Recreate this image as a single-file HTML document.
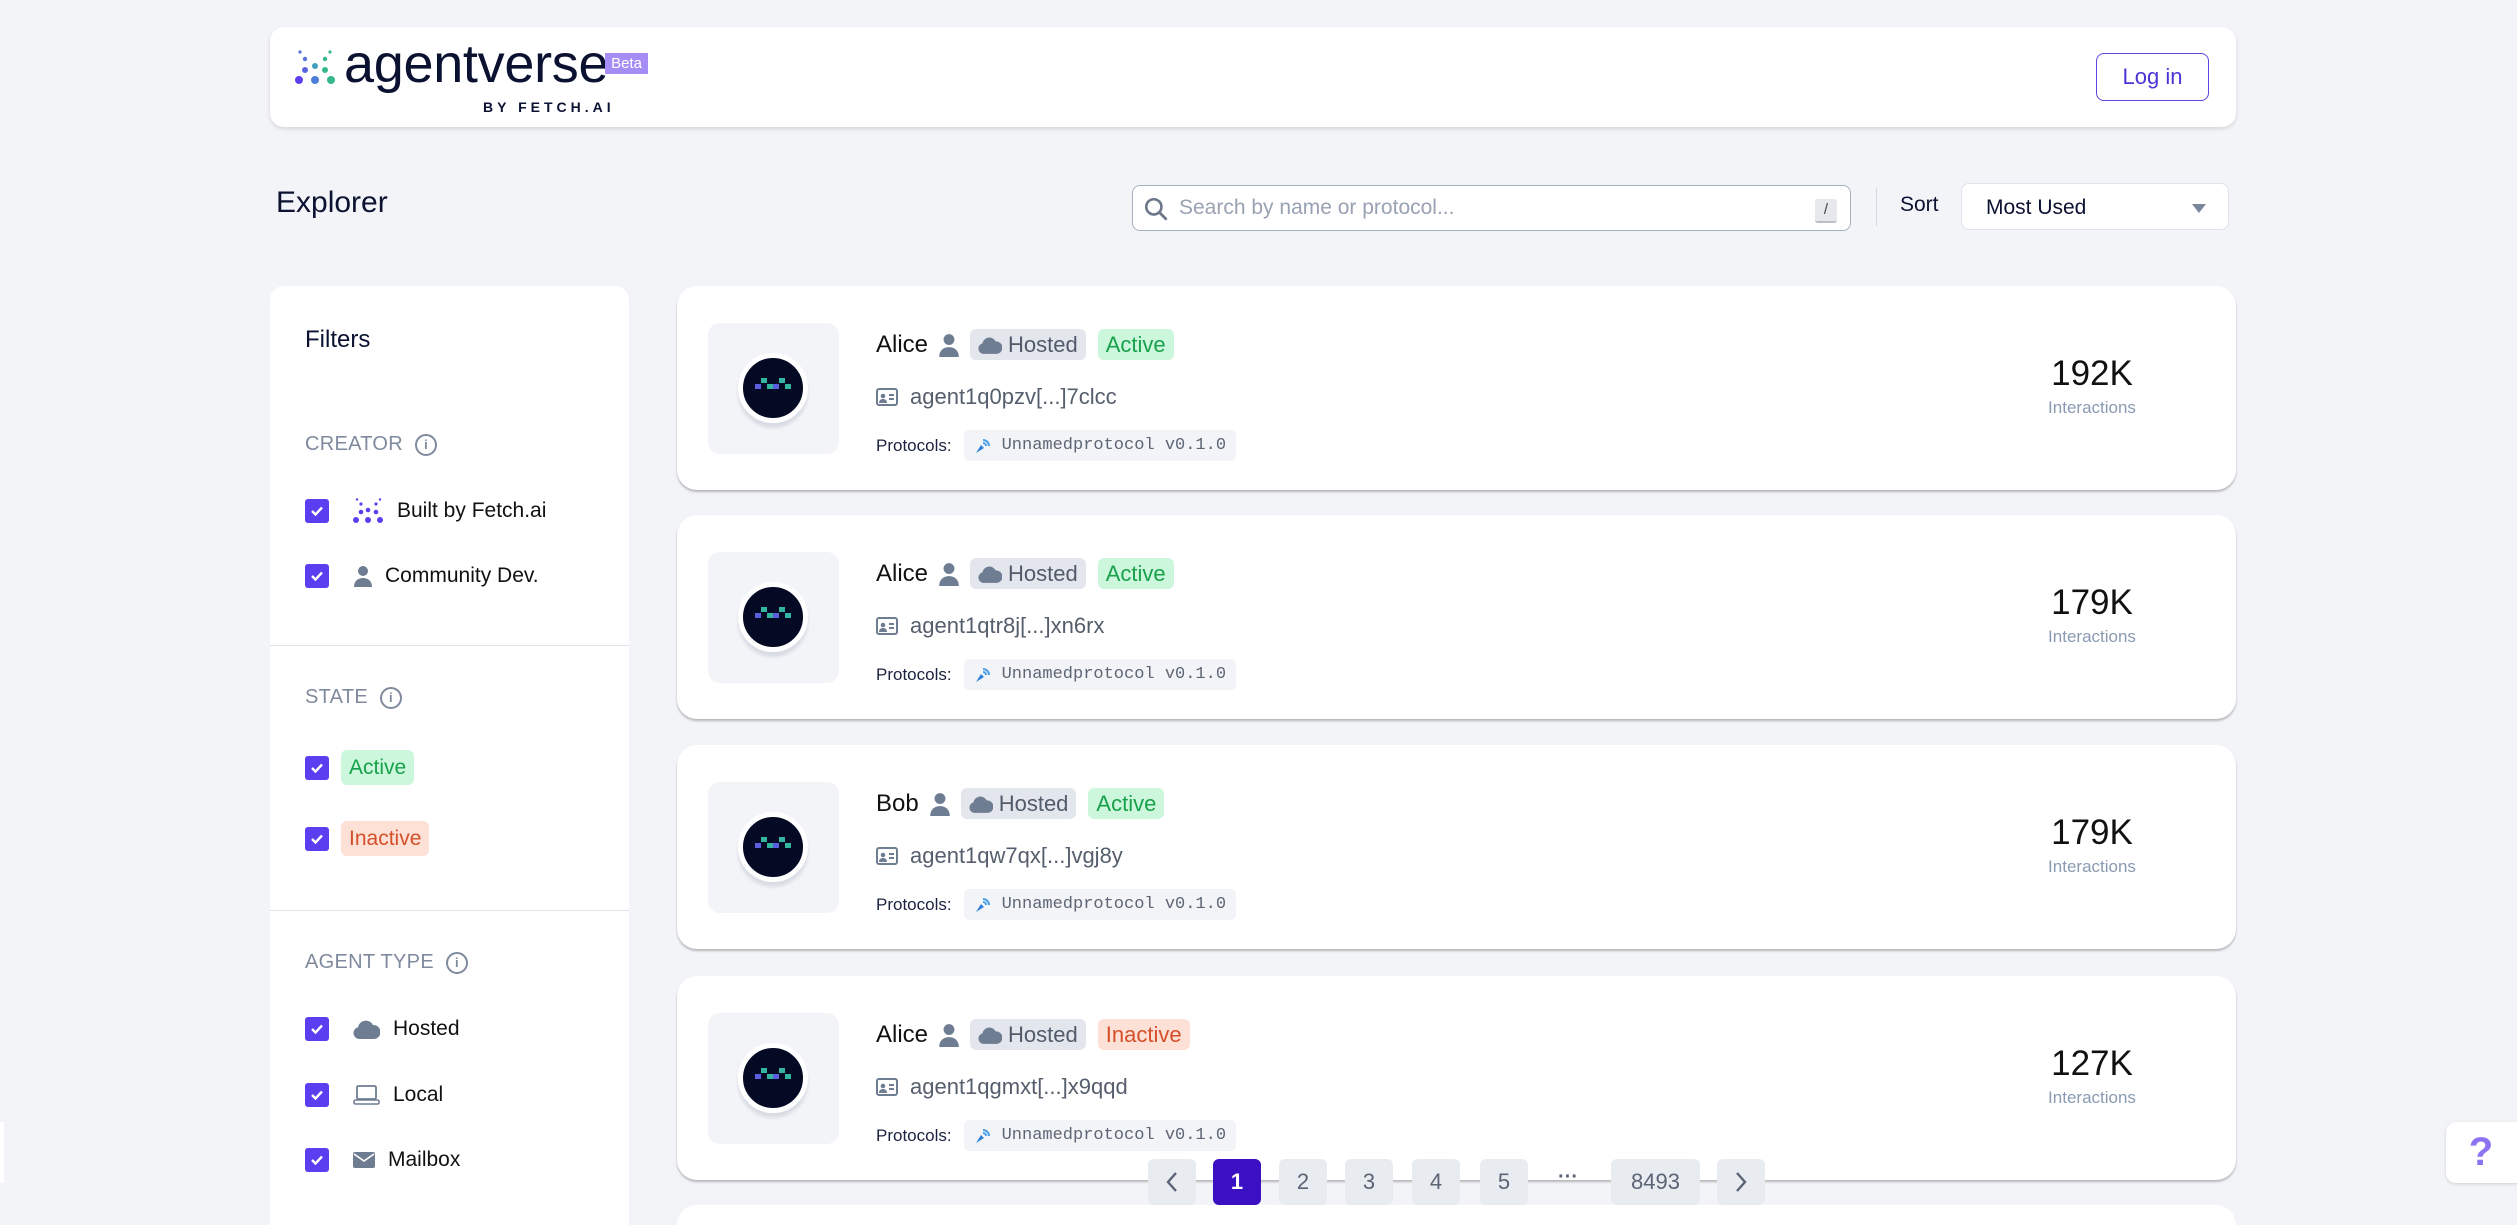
<!DOCTYPE html>
<html style="width:2517px;height:1225px;overflow:hidden"><head><meta charset="utf-8">
<style>
*{box-sizing:border-box;margin:0;padding:0}
body{width:2517px;height:1225px;overflow:hidden;background:#f3f4f8;font-family:"Liberation Sans",sans-serif;color:#0b1231;position:relative}
.abs{position:absolute}
.hdr{left:270px;top:27px;width:1966px;height:100px;background:#fff;border-radius:14px;box-shadow:0 2px 4px rgba(0,0,0,.12)}
.login{left:2096px;top:53px;width:113px;height:48px;border:1.5px solid #5b46e0;border-radius:8px;color:#4a35d6;font-size:22px;display:flex;align-items:center;justify-content:center}
.side{left:270px;top:286px;width:359px;height:939px;background:#fff;border-radius:14px 14px 0 0}
.sec{color:#7f8a9e;font-size:20px;letter-spacing:.3px;display:flex;align-items:center;gap:12px}
.info{width:22px;height:22px;border:2px solid #7f8a9e;border-radius:50%;font-size:13px;font-weight:bold;display:flex;align-items:center;justify-content:center}
.cb{width:24px;height:24px;background:#5b3ef0;border-radius:3px;display:flex;align-items:center;justify-content:center}
.row{display:flex;align-items:center;font-size:21px;color:#111}
.hr{height:1px;background:#dfe2e8;width:359px;left:270px}
.card{left:677px;width:1559px;height:204px;background:#fff;border-radius:20px;box-shadow:0 2px 2px rgba(0,0,0,.25)}
.av{left:31px;top:37px;width:131px;height:131px;background:#f3f4f8;border-radius:12px}
.circ{left:30px;top:30px;width:70px;height:70px;border-radius:50%;background:#050a24;border:5px solid #fff;box-shadow:0 5px 3px #d9dce4}
.name{left:199px;top:43px;display:flex;align-items:center;gap:10px;font-size:24px;color:#111}
.badge{height:31px;border-radius:6px;padding:0 8px;display:flex;align-items:center;gap:6px;font-size:22px}
.hosted{background:#e3e6ec;color:#515b6b}
.act{background:#cdf7dc;color:#18a14b}
.inact{background:#fde0d6;color:#d4502a}
.addr{left:199px;top:98px;display:flex;align-items:center;gap:12px;font-size:22px;color:#555e6c}
.proto{left:199px;top:144px;display:flex;align-items:center;gap:12px;font-size:17px;color:#1b2240}
.chip{background:#f3f4f8;border-radius:5px;height:31px;padding:0 10px;display:flex;align-items:center;gap:10px;font-family:"Liberation Mono",monospace;color:#5d6675;font-size:17px}
.num{left:1325px;width:180px;top:68px;text-align:center;font-size:35px;color:#111}
.int{left:1325px;width:180px;top:112px;text-align:center;font-size:17px;color:#8a9ab2}
.pg{top:1159px;width:48px;height:46px;background:#e8ebf0;border-radius:6px;display:flex;align-items:center;justify-content:center;font-size:22px;color:#5a6475}
</style></head><body>

<div class="abs hdr">
  <svg class="abs" style="left:25px;top:23px" width="42" height="36" viewBox="0 0 42 36">
    <circle cx="4" cy="30" r="4" fill="#5f3ef0"/><circle cx="20" cy="30" r="4" fill="#4c7dd9"/><circle cx="36" cy="30" r="4" fill="#35b88a"/>
    <circle cx="10" cy="20" r="3" fill="#5a63e0"/><circle cx="20" cy="16" r="3" fill="#3f9fc0"/><circle cx="30" cy="20" r="3" fill="#35b88a"/>
    <circle cx="10" cy="9" r="2.2" fill="#5a73d8"/><circle cx="30" cy="9" r="2.2" fill="#35b88a"/>
    <circle cx="5" cy="2" r="1.6" fill="#5a73d8"/><circle cx="35" cy="2" r="1.6" fill="#35b88a"/>
  </svg>
  <div class="abs" style="left:74px;top:6px;font-size:54px;color:#0b1231;letter-spacing:-.3px">agentverse</div>
  <div class="abs" style="left:335px;top:26px;width:43px;height:21px;background:#a58df5;color:#fff;font-size:15px;display:flex;align-items:center;justify-content:center">Beta</div>
  <div class="abs" style="left:213px;top:72px;font-size:14px;font-weight:bold;letter-spacing:4px;color:#0b1231">BY FETCH.AI</div>
</div>
<div class="abs login">Log in</div>

<div class="abs" style="left:276px;top:186px;font-size:30px;color:#0b1231">Explorer</div>

<div class="abs" style="left:1132px;top:185px;width:719px;height:46px;background:#fff;border:1.5px solid #a9b0bd;border-radius:8px">
  <svg class="abs" style="left:10px;top:10px" width="26" height="26" viewBox="0 0 24 24"><circle cx="10" cy="10" r="7" fill="none" stroke="#6c778a" stroke-width="2.4"/><path d="M15 15l6 6" stroke="#6c778a" stroke-width="2.6" stroke-linecap="round"/></svg>
  <div class="abs" style="left:46px;top:10px;font-size:21px;color:#98a2b3">Search by name or protocol...</div>
  <div class="abs" style="left:682px;top:13px;width:22px;height:24px;background:#e6e8ec;border-bottom:2px solid #b9bec8;border-radius:3px;font-size:15px;color:#444;text-align:center;line-height:22px">/</div>
</div>
<div class="abs" style="left:1876px;top:188px;width:1px;height:38px;background:#d3d7de"></div>
<div class="abs" style="left:1900px;top:193px;font-size:21px;color:#0b1231">Sort</div>
<div class="abs" style="left:1961px;top:183px;width:268px;height:47px;background:#fff;border:1px solid #dfe2e8;border-radius:8px">
  <div class="abs" style="left:24px;top:12px;font-size:21px;color:#0b1231">Most Used</div>
  <div class="abs" style="left:230px;top:20px;width:0;height:0;border-left:7px solid transparent;border-right:7px solid transparent;border-top:9px solid #7a869a"></div>
</div>

<div class="abs side"></div>
<div class="abs" style="left:305px;top:326px;font-size:24px;color:#0b1231">Filters</div>

<div class="abs sec" style="left:305px;top:433px">CREATOR <span class="info">i</span></div>
<div class="abs row" style="left:305px;top:498px"><div class="cb"><svg width="14" height="12" viewBox="0 0 14 12"><path d="M2 6l3.5 3.5L12 2.5" stroke="#fff" stroke-width="2.4" fill="none"/></svg></div>
  <svg style="margin-left:24px" width="30" height="26" viewBox="0 0 30 26"><g fill="#5f3ef0"><circle cx="3" cy="22" r="3"/><circle cx="15" cy="22" r="3"/><circle cx="27" cy="22" r="3"/><circle cx="8" cy="14" r="2.3"/><circle cx="15" cy="12" r="2.3"/><circle cx="23" cy="14" r="2.3"/><circle cx="8" cy="6" r="1.6"/><circle cx="23" cy="6" r="1.6"/><circle cx="4" cy="1.5" r="1.2"/><circle cx="27" cy="1.5" r="1.2"/></g></svg>
  <span style="margin-left:14px">Built by Fetch.ai</span></div>
<div class="abs row" style="left:305px;top:564px"><div class="cb"><svg width="14" height="12" viewBox="0 0 14 12"><path d="M2 6l3.5 3.5L12 2.5" stroke="#fff" stroke-width="2.4" fill="none"/></svg></div>
  <svg style="margin-left:24px" width="20" height="22" viewBox="0 0 20 22"><circle cx="10" cy="6" r="5" fill="#6f7d92"/><path d="M1 22c0-6 4-9 9-9s9 3 9 9z" fill="#6f7d92"/></svg>
  <span style="margin-left:12px">Community Dev.</span></div>
<div class="abs hr" style="top:645px"></div>

<div class="abs sec" style="left:305px;top:686px">STATE <span class="info">i</span></div>
<div class="abs row" style="left:305px;top:750px"><div class="cb"><svg width="14" height="12" viewBox="0 0 14 12"><path d="M2 6l3.5 3.5L12 2.5" stroke="#fff" stroke-width="2.4" fill="none"/></svg></div>
  <span class="badge act" style="margin-left:12px;height:35px;font-size:21px">Active</span></div>
<div class="abs row" style="left:305px;top:821px"><div class="cb"><svg width="14" height="12" viewBox="0 0 14 12"><path d="M2 6l3.5 3.5L12 2.5" stroke="#fff" stroke-width="2.4" fill="none"/></svg></div>
  <span class="badge inact" style="margin-left:12px;height:35px;font-size:21px">Inactive</span></div>
<div class="abs hr" style="top:910px"></div>

<div class="abs sec" style="left:305px;top:951px">AGENT TYPE <span class="info">i</span></div>
<div class="abs row" style="left:305px;top:1017px"><div class="cb"><svg width="14" height="12" viewBox="0 0 14 12"><path d="M2 6l3.5 3.5L12 2.5" stroke="#fff" stroke-width="2.4" fill="none"/></svg></div>
  <svg style="margin-left:24px" width="27" height="20" viewBox="0 0 27 20"><path d="M6 20a6 6 0 0 1-1-11.8A8 8 0 0 1 20 6a6 6 0 0 1 1 14z" fill="#6f7d92"/></svg>
  <span style="margin-left:13px">Hosted</span></div>
<div class="abs row" style="left:305px;top:1083px"><div class="cb"><svg width="14" height="12" viewBox="0 0 14 12"><path d="M2 6l3.5 3.5L12 2.5" stroke="#fff" stroke-width="2.4" fill="none"/></svg></div>
  <svg style="margin-left:24px" width="27" height="20" viewBox="0 0 27 20"><rect x="4" y="1" width="19" height="13" rx="1.5" fill="none" stroke="#6f7d92" stroke-width="1.8"/><rect x="1" y="15" width="25" height="4" rx="1.5" fill="none" stroke="#6f7d92" stroke-width="1.6"/></svg>
  <span style="margin-left:13px">Local</span></div>
<div class="abs row" style="left:305px;top:1148px"><div class="cb"><svg width="14" height="12" viewBox="0 0 14 12"><path d="M2 6l3.5 3.5L12 2.5" stroke="#fff" stroke-width="2.4" fill="none"/></svg></div>
  <svg style="margin-left:24px" width="22" height="18" viewBox="0 0 22 18"><rect x="0" y="1" width="22" height="16" rx="2" fill="#6f7d92"/><path d="M1 3l10 7 10-7" stroke="#fff" stroke-width="1.6" fill="none"/></svg>
  <span style="margin-left:13px">Mailbox</span></div>

<div class="abs card" style="top:286px">
  <div class="abs av"><div class="abs circ"><svg class="abs" style="left:12px;top:20px" width="36" height="12" viewBox="0 0 36 12"><rect x="0" y="6" width="6" height="5" fill="#5a5fe0"/><rect x="6" y="0" width="6" height="5" fill="#33b5a0"/><rect x="12" y="6" width="6" height="5" fill="#33b5a0"/><rect x="18" y="6" width="6" height="5" fill="#5a5fe0"/><rect x="24" y="0" width="6" height="5" fill="#33b5a0"/><rect x="30" y="6" width="6" height="5" fill="#33b5a0"/></svg></div></div>
  <div class="abs name">Alice <svg width="22" height="24" viewBox="0 0 20 22"><circle cx="10" cy="6" r="5" fill="#6f7d92"/><path d="M1 22c0-6 4-9 9-9s9 3 9 9z" fill="#6f7d92"/></svg>
    <span class="badge hosted"><svg width="24" height="18" viewBox="0 0 27 20"><path d="M6 20a6 6 0 0 1-1-11.8A8 8 0 0 1 20 6a6 6 0 0 1 1 14z" fill="#6f7d92"/></svg>Hosted</span><span class="badge act" style="margin-left:2px">Active</span></div>
  <div class="abs addr"><svg width="22" height="18" viewBox="0 0 22 18"><rect x="1" y="1" width="20" height="16" rx="2" fill="none" stroke="#6f7d92" stroke-width="2"/><circle cx="7" cy="8" r="2.3" fill="#6f7d92"/><path d="M3 15c0-3 2-4 4-4s4 1 4 4z" fill="#6f7d92"/><path d="M13 7h5M13 11h5" stroke="#6f7d92" stroke-width="2"/></svg>agent1q0pzv[...]7clcc</div>
  <div class="abs proto">Protocols: <span class="chip"><svg width="18" height="18" viewBox="0 0 18 18"><path d="M2 16l5-8 3 3z" fill="#2f7fd8"/><path d="M9 3a6 6 0 0 1 6 6M9 6a3 3 0 0 1 3 3" stroke="#4aa0e8" stroke-width="2" fill="none"/></svg>Unnamedprotocol v0.1.0</span></div>
  <div class="abs num">192K</div><div class="abs int">Interactions</div>
</div>

<div class="abs card" style="top:515px">
  <div class="abs av"><div class="abs circ"><svg class="abs" style="left:12px;top:20px" width="36" height="12" viewBox="0 0 36 12"><rect x="0" y="6" width="6" height="5" fill="#5a5fe0"/><rect x="6" y="0" width="6" height="5" fill="#33b5a0"/><rect x="12" y="6" width="6" height="5" fill="#33b5a0"/><rect x="18" y="6" width="6" height="5" fill="#5a5fe0"/><rect x="24" y="0" width="6" height="5" fill="#33b5a0"/><rect x="30" y="6" width="6" height="5" fill="#33b5a0"/></svg></div></div>
  <div class="abs name">Alice <svg width="22" height="24" viewBox="0 0 20 22"><circle cx="10" cy="6" r="5" fill="#6f7d92"/><path d="M1 22c0-6 4-9 9-9s9 3 9 9z" fill="#6f7d92"/></svg>
    <span class="badge hosted"><svg width="24" height="18" viewBox="0 0 27 20"><path d="M6 20a6 6 0 0 1-1-11.8A8 8 0 0 1 20 6a6 6 0 0 1 1 14z" fill="#6f7d92"/></svg>Hosted</span><span class="badge act" style="margin-left:2px">Active</span></div>
  <div class="abs addr"><svg width="22" height="18" viewBox="0 0 22 18"><rect x="1" y="1" width="20" height="16" rx="2" fill="none" stroke="#6f7d92" stroke-width="2"/><circle cx="7" cy="8" r="2.3" fill="#6f7d92"/><path d="M3 15c0-3 2-4 4-4s4 1 4 4z" fill="#6f7d92"/><path d="M13 7h5M13 11h5" stroke="#6f7d92" stroke-width="2"/></svg>agent1qtr8j[...]xn6rx</div>
  <div class="abs proto">Protocols: <span class="chip"><svg width="18" height="18" viewBox="0 0 18 18"><path d="M2 16l5-8 3 3z" fill="#2f7fd8"/><path d="M9 3a6 6 0 0 1 6 6M9 6a3 3 0 0 1 3 3" stroke="#4aa0e8" stroke-width="2" fill="none"/></svg>Unnamedprotocol v0.1.0</span></div>
  <div class="abs num">179K</div><div class="abs int">Interactions</div>
</div>

<div class="abs card" style="top:745px">
  <div class="abs av"><div class="abs circ"><svg class="abs" style="left:12px;top:20px" width="36" height="12" viewBox="0 0 36 12"><rect x="0" y="6" width="6" height="5" fill="#5a5fe0"/><rect x="6" y="0" width="6" height="5" fill="#33b5a0"/><rect x="12" y="6" width="6" height="5" fill="#33b5a0"/><rect x="18" y="6" width="6" height="5" fill="#5a5fe0"/><rect x="24" y="0" width="6" height="5" fill="#33b5a0"/><rect x="30" y="6" width="6" height="5" fill="#33b5a0"/></svg></div></div>
  <div class="abs name">Bob <svg width="22" height="24" viewBox="0 0 20 22"><circle cx="10" cy="6" r="5" fill="#6f7d92"/><path d="M1 22c0-6 4-9 9-9s9 3 9 9z" fill="#6f7d92"/></svg>
    <span class="badge hosted"><svg width="24" height="18" viewBox="0 0 27 20"><path d="M6 20a6 6 0 0 1-1-11.8A8 8 0 0 1 20 6a6 6 0 0 1 1 14z" fill="#6f7d92"/></svg>Hosted</span><span class="badge act" style="margin-left:2px">Active</span></div>
  <div class="abs addr"><svg width="22" height="18" viewBox="0 0 22 18"><rect x="1" y="1" width="20" height="16" rx="2" fill="none" stroke="#6f7d92" stroke-width="2"/><circle cx="7" cy="8" r="2.3" fill="#6f7d92"/><path d="M3 15c0-3 2-4 4-4s4 1 4 4z" fill="#6f7d92"/><path d="M13 7h5M13 11h5" stroke="#6f7d92" stroke-width="2"/></svg>agent1qw7qx[...]vgj8y</div>
  <div class="abs proto">Protocols: <span class="chip"><svg width="18" height="18" viewBox="0 0 18 18"><path d="M2 16l5-8 3 3z" fill="#2f7fd8"/><path d="M9 3a6 6 0 0 1 6 6M9 6a3 3 0 0 1 3 3" stroke="#4aa0e8" stroke-width="2" fill="none"/></svg>Unnamedprotocol v0.1.0</span></div>
  <div class="abs num">179K</div><div class="abs int">Interactions</div>
</div>

<div class="abs card" style="top:976px">
  <div class="abs av"><div class="abs circ"><svg class="abs" style="left:12px;top:20px" width="36" height="12" viewBox="0 0 36 12"><rect x="0" y="6" width="6" height="5" fill="#5a5fe0"/><rect x="6" y="0" width="6" height="5" fill="#33b5a0"/><rect x="12" y="6" width="6" height="5" fill="#33b5a0"/><rect x="18" y="6" width="6" height="5" fill="#5a5fe0"/><rect x="24" y="0" width="6" height="5" fill="#33b5a0"/><rect x="30" y="6" width="6" height="5" fill="#33b5a0"/></svg></div></div>
  <div class="abs name">Alice <svg width="22" height="24" viewBox="0 0 20 22"><circle cx="10" cy="6" r="5" fill="#6f7d92"/><path d="M1 22c0-6 4-9 9-9s9 3 9 9z" fill="#6f7d92"/></svg>
    <span class="badge hosted"><svg width="24" height="18" viewBox="0 0 27 20"><path d="M6 20a6 6 0 0 1-1-11.8A8 8 0 0 1 20 6a6 6 0 0 1 1 14z" fill="#6f7d92"/></svg>Hosted</span><span class="badge inact" style="margin-left:2px">Inactive</span></div>
  <div class="abs addr"><svg width="22" height="18" viewBox="0 0 22 18"><rect x="1" y="1" width="20" height="16" rx="2" fill="none" stroke="#6f7d92" stroke-width="2"/><circle cx="7" cy="8" r="2.3" fill="#6f7d92"/><path d="M3 15c0-3 2-4 4-4s4 1 4 4z" fill="#6f7d92"/><path d="M13 7h5M13 11h5" stroke="#6f7d92" stroke-width="2"/></svg>agent1qgmxt[...]x9qqd</div>
  <div class="abs proto">Protocols: <span class="chip"><svg width="18" height="18" viewBox="0 0 18 18"><path d="M2 16l5-8 3 3z" fill="#2f7fd8"/><path d="M9 3a6 6 0 0 1 6 6M9 6a3 3 0 0 1 3 3" stroke="#4aa0e8" stroke-width="2" fill="none"/></svg>Unnamedprotocol v0.1.0</span></div>
  <div class="abs num">127K</div><div class="abs int">Interactions</div>
</div>

<div class="abs card" style="top:1205px;height:20px;border-radius:20px 20px 0 0;box-shadow:none"></div>

<div class="abs pg" style="left:1148px"><svg width="14" height="22" viewBox="0 0 14 22"><path d="M11 2L3 11l8 9" stroke="#5a6475" stroke-width="2.4" fill="none"/></svg></div>
<div class="abs pg" style="left:1213px;background:#3a10c2;color:#fff;font-weight:bold">1</div>
<div class="abs pg" style="left:1279px">2</div>
<div class="abs pg" style="left:1345px">3</div>
<div class="abs pg" style="left:1412px">4</div>
<div class="abs pg" style="left:1480px">5</div>
<div class="abs" style="left:1558px;top:1166px;font-size:20px;color:#5a6475;font-weight:bold">···</div>
<div class="abs pg" style="left:1611px;width:89px">8493</div>
<div class="abs pg" style="left:1717px"><svg width="14" height="22" viewBox="0 0 14 22"><path d="M3 2l8 9-8 9" stroke="#5a6475" stroke-width="2.4" fill="none"/></svg></div>

<div class="abs" style="left:2446px;top:1122px;width:80px;height:61px;background:#fff;border-radius:10px;box-shadow:0 1px 3px rgba(0,0,0,.15);display:flex;align-items:center;justify-content:center;padding-right:10px">
  <span style="font-size:40px;font-weight:bold;color:#8d72f2">?</span></div>
<div class="abs" style="left:0;top:1122px;width:4px;height:61px;background:#fff"></div>
</body></html>
